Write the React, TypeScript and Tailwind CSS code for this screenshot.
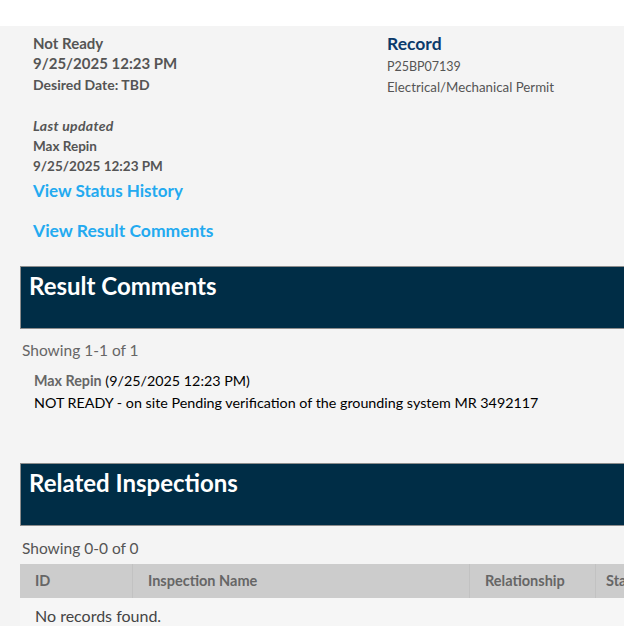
import React from "react";

const font = { fontFamily: "Lato, 'Open Sans', sans-serif" };

function SectionHeader({ title }: { title: string }) {
  return (
    <div className="ml-[20px] w-[700px] h-[63px] bg-[#002d46] border border-[#8c8c8c] pl-[8px] pt-[5px]">
      <div className="text-white text-[24px] font-bold leading-[28px]">{title}</div>
    </div>
  );
}

export default function App() {
  return (
    <div className="w-[624px] h-[626px] overflow-hidden bg-[#f4f4f4]" style={font}>
      <div className="h-[26px] bg-white" />
      <div className="flex pt-[7px]">
        <div className="w-[387px] pl-[33px] text-[#555555]">
          <div className="text-[15px] font-bold leading-[20px]">Not Ready</div>
          <div className="text-[15px] font-bold leading-[20px]">9/25/2025 12:23 PM</div>
          <div className="text-[14px] font-bold leading-[20px] mt-[2px]">Desired Date: TBD</div>
          <div className="text-[14px] font-bold italic leading-[20px] mt-[21px] tracking-[0.3px]">Last updated</div>
          <div className="text-[13.5px] font-bold leading-[20px]">Max Repin</div>
          <div className="text-[13.5px] font-bold leading-[20px]">9/25/2025 12:23 PM</div>
          <div className="text-[17px] font-bold leading-[24px] mt-[3px] text-[#23aaf0]">View Status History</div>
          <div className="text-[17.5px] font-bold leading-[24px] mt-[16px] text-[#23aaf0]">View Result Comments</div>
        </div>
        <div className="pt-[1px]">
          <div className="text-[17.5px] font-bold leading-[20px] text-[#0b3a6b]">Record</div>
          <div className="text-[12.5px] leading-[20px] mt-[3px] text-[#555555]">P25BP07139</div>
          <div className="text-[13.3px] leading-[20px] text-[#555555]">Electrical/Mechanical Permit</div>
        </div>
      </div>
      <div className="mt-[23px]">
        <SectionHeader title="Result Comments" />
      </div>
      <div className="ml-[22px] mt-[11px] text-[15.5px] leading-[20px] text-[#666666]">Showing 1-1 of 1</div>
      <div className="ml-[34px] mt-[11px] text-[14.3px] leading-[20px] text-black">
        <div>
          <span className="font-bold text-[#666666]">Max Repin</span> (9/25/2025 12:23 PM)
        </div>
        <div className="mt-[2px]">NOT READY - on site Pending verification of the grounding system MR 3492117</div>
      </div>
      <div className="mt-[50px]">
        <SectionHeader title="Related Inspections" />
      </div>
      <div className="ml-[22px] mt-[12px] text-[15.5px] leading-[20px] text-[#555555]">Showing 0-0 of 0</div>
      <div className="ml-[20px] mt-[6px] w-[700px]">
        <div className="flex h-[34px] bg-[#cccccc] text-[14.5px] font-bold text-[#666666]">
          <div className="w-[113px] pl-[15px] flex items-center border-r border-[#c2c2c2]">ID</div>
          <div className="w-[337px] pl-[15px] flex items-center border-r border-[#c2c2c2]">Inspection Name</div>
          <div className="w-[126px] pl-[15px] flex items-center border-r border-[#c2c2c2]">Relationship</div>
          <div className="flex-1 pl-[10px] flex items-center">Status</div>
        </div>
        <div className="h-[36px] bg-[#f6f6f6] pl-[15px] flex items-center text-[16px] text-[#444444]">No records found.</div>
      </div>
    </div>
  );
}
